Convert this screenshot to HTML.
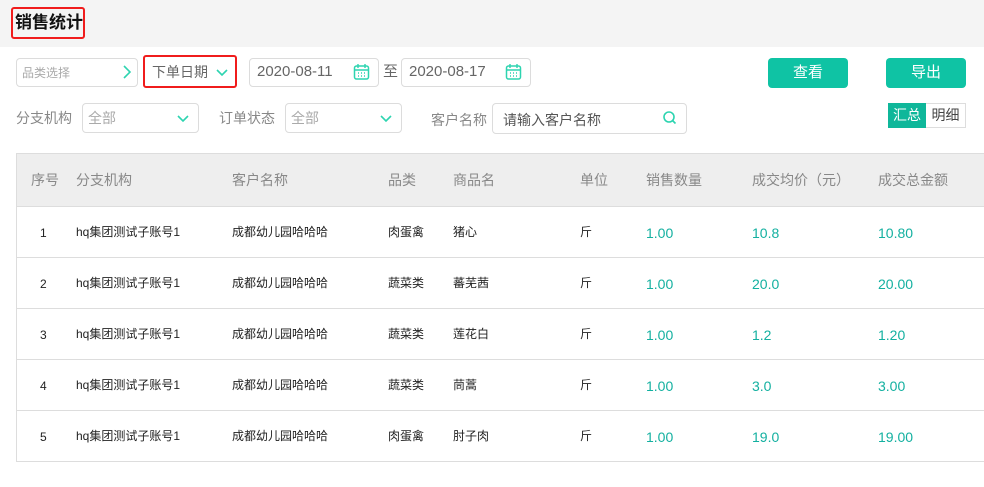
<!DOCTYPE html>
<html><head><meta charset="utf-8"><style>
*{box-sizing:border-box;margin:0;padding:0}
body{width:984px;height:487px;background:#fff;font-family:"Liberation Sans","Noto Sans CJK SC",sans-serif;position:relative;overflow:hidden;color:#333}
.a{position:absolute}
.box{position:absolute;border:1px solid #dcdcdc;border-radius:4px;background:#fff}
.t{position:absolute;white-space:nowrap;line-height:20px}
.btn{position:absolute;background:#0fc3a4;color:#fff;border-radius:4px;font-size:15px;text-align:center;line-height:30px}
.hd{position:absolute;top:153px;height:54px;line-height:54px;font-size:14px;color:#888}
.c{position:absolute;font-size:12px;color:#222;white-space:nowrap;line-height:16px}
.g{position:absolute;font-size:14px;color:#13b0a0;white-space:nowrap;line-height:16px}
</style></head><body>
<div class="a" style="left:0;top:0;width:984px;height:47px;background:#f4f4f4"></div>
<div class="a" style="left:11px;top:7px;width:74px;height:32px;border:2px solid #f01c1c;border-radius:3px"></div>
<div class="t" style="left:15px;top:12px;font-size:17px;font-weight:bold;color:#111;line-height:22px">销售统计</div>

<div class="box" style="left:16px;top:58px;width:122px;height:29px"></div>
<div class="t" style="left:22px;top:63px;font-size:12px;color:#aaa">品类选择</div>
<svg class="a" style="left:122px;top:65px" width="10" height="14"><path d="M2 1l6 6-6 6" stroke="#2dd4b0" stroke-width="1.6" fill="none"/></svg>

<div class="a" style="left:143px;top:55px;width:94px;height:33px;border:2px solid #f01c1c;border-radius:3px"></div>
<div class="t" style="left:152px;top:62px;font-size:14px;color:#666">下单日期</div>
<svg class="a" style="left:216px;top:69px" width="12" height="8"><path d="M1 1l5 5 5-5" stroke="#2dd4b0" stroke-width="1.6" fill="none"/></svg>

<div class="box" style="left:249px;top:58px;width:130px;height:29px"></div>
<div class="t" style="left:257px;top:62px;font-size:15px;color:#666">2020-08-11</div>
<svg class="a" style="left:353px;top:63px" width="18" height="18"><rect x="1.5" y="3" width="14" height="13" rx="2" stroke="#2dd4b0" stroke-width="1.5" fill="none"/><path d="M5 1v4M12 1v4M2 7h13M5 10h1M8 10h1M11 10h1M5 13h1M8 13h1M11 13h1" stroke="#2dd4b0" stroke-width="1.4"/></svg>
<div class="t" style="left:383px;top:62px;font-size:15px;color:#666">至</div>
<div class="box" style="left:401px;top:58px;width:130px;height:29px"></div>
<div class="t" style="left:409px;top:62px;font-size:15px;color:#666">2020-08-17</div>
<svg class="a" style="left:505px;top:63px" width="18" height="18"><rect x="1.5" y="3" width="14" height="13" rx="2" stroke="#2dd4b0" stroke-width="1.5" fill="none"/><path d="M5 1v4M12 1v4M2 7h13M5 10h1M8 10h1M11 10h1M5 13h1M8 13h1M11 13h1" stroke="#2dd4b0" stroke-width="1.4"/></svg>

<div class="btn" style="left:768px;top:58px;width:80px;height:30px">查看</div>
<div class="btn" style="left:886px;top:58px;width:80px;height:30px">导出</div>

<div class="t" style="left:16px;top:108px;font-size:14px;color:#888">分支机构</div>
<div class="box" style="left:82px;top:103px;width:117px;height:30px"></div>
<div class="t" style="left:88px;top:108px;font-size:14px;color:#aaa">全部</div>
<svg class="a" style="left:177px;top:115px" width="12" height="8"><path d="M1 1l5 5 5-5" stroke="#2dd4b0" stroke-width="1.6" fill="none"/></svg>
<div class="t" style="left:219px;top:108px;font-size:14px;color:#888">订单状态</div>
<div class="box" style="left:285px;top:103px;width:117px;height:30px"></div>
<div class="t" style="left:291px;top:108px;font-size:14px;color:#aaa">全部</div>
<svg class="a" style="left:380px;top:115px" width="12" height="8"><path d="M1 1l5 5 5-5" stroke="#2dd4b0" stroke-width="1.6" fill="none"/></svg>
<div class="t" style="left:431px;top:110px;font-size:14px;color:#888">客户名称</div>
<div class="box" style="left:492px;top:103px;width:195px;height:31px"></div>
<div class="t" style="left:503px;top:110px;font-size:14px;color:#555">请输入客户名称</div>
<svg class="a" style="left:662px;top:110px" width="16" height="16"><circle cx="7" cy="7" r="5" stroke="#2dd4b0" stroke-width="1.6" fill="none"/><path d="M10.5 10.5l3 3" stroke="#2dd4b0" stroke-width="1.6"/></svg>

<div class="a" style="left:888px;top:103px;width:38px;height:25px;background:#0fb79a;color:#fff;font-size:14px;line-height:25px;text-align:center">汇总</div>
<div class="a" style="left:926px;top:103px;width:40px;height:25px;border:1px solid #ddd;border-left:none;color:#444;font-size:14px;line-height:23px;text-align:center">明细</div>

<div class="a" style="left:16px;top:153px;width:968px;height:54px;background:#eeeeee;border-top:1px solid #ddd;border-left:1px solid #ddd;border-bottom:1px solid #ddd"></div>
<div class="a" style="left:16px;top:207px;width:1px;height:255px;background:#ddd"></div>
<div class="hd" style="left:31px">序号</div>
<div class="hd" style="left:76px">分支机构</div>
<div class="hd" style="left:232px">客户名称</div>
<div class="hd" style="left:388px">品类</div>
<div class="hd" style="left:453px">商品名</div>
<div class="hd" style="left:580px">单位</div>
<div class="hd" style="left:646px">销售数量</div>
<div class="hd" style="left:752px">成交均价（元）</div>
<div class="hd" style="left:878px">成交总金额</div>

<div class="a" style="left:16px;top:257px;width:968px;height:1px;background:#ddd"></div>
<div class="a" style="left:16px;top:308px;width:968px;height:1px;background:#ddd"></div>
<div class="a" style="left:16px;top:359px;width:968px;height:1px;background:#ddd"></div>
<div class="a" style="left:16px;top:410px;width:968px;height:1px;background:#ddd"></div>
<div class="a" style="left:16px;top:461px;width:968px;height:1px;background:#ddd"></div>

<div class="c" style="left:40px;top:225px">1</div><div class="c" style="left:76px;top:224px">hq集团测试子账号1</div><div class="c" style="left:232px;top:224px">成都幼儿园哈哈哈</div><div class="c" style="left:388px;top:224px">肉蛋禽</div><div class="c" style="left:453px;top:224px">猪心</div><div class="c" style="left:580px;top:224px">斤</div><div class="g" style="left:646px;top:225px">1.00</div><div class="g" style="left:752px;top:225px">10.8</div><div class="g" style="left:878px;top:225px">10.80</div>
<div class="c" style="left:40px;top:276px">2</div><div class="c" style="left:76px;top:275px">hq集团测试子账号1</div><div class="c" style="left:232px;top:275px">成都幼儿园哈哈哈</div><div class="c" style="left:388px;top:275px">蔬菜类</div><div class="c" style="left:453px;top:275px">蕃芜茜</div><div class="c" style="left:580px;top:275px">斤</div><div class="g" style="left:646px;top:276px">1.00</div><div class="g" style="left:752px;top:276px">20.0</div><div class="g" style="left:878px;top:276px">20.00</div>
<div class="c" style="left:40px;top:327px">3</div><div class="c" style="left:76px;top:326px">hq集团测试子账号1</div><div class="c" style="left:232px;top:326px">成都幼儿园哈哈哈</div><div class="c" style="left:388px;top:326px">蔬菜类</div><div class="c" style="left:453px;top:326px">莲花白</div><div class="c" style="left:580px;top:326px">斤</div><div class="g" style="left:646px;top:327px">1.00</div><div class="g" style="left:752px;top:327px">1.2</div><div class="g" style="left:878px;top:327px">1.20</div>
<div class="c" style="left:40px;top:378px">4</div><div class="c" style="left:76px;top:377px">hq集团测试子账号1</div><div class="c" style="left:232px;top:377px">成都幼儿园哈哈哈</div><div class="c" style="left:388px;top:377px">蔬菜类</div><div class="c" style="left:453px;top:377px">茼蒿</div><div class="c" style="left:580px;top:377px">斤</div><div class="g" style="left:646px;top:378px">1.00</div><div class="g" style="left:752px;top:378px">3.0</div><div class="g" style="left:878px;top:378px">3.00</div>
<div class="c" style="left:40px;top:429px">5</div><div class="c" style="left:76px;top:428px">hq集团测试子账号1</div><div class="c" style="left:232px;top:428px">成都幼儿园哈哈哈</div><div class="c" style="left:388px;top:428px">肉蛋禽</div><div class="c" style="left:453px;top:428px">肘子肉</div><div class="c" style="left:580px;top:428px">斤</div><div class="g" style="left:646px;top:429px">1.00</div><div class="g" style="left:752px;top:429px">19.0</div><div class="g" style="left:878px;top:429px">19.00</div>
</body></html>
